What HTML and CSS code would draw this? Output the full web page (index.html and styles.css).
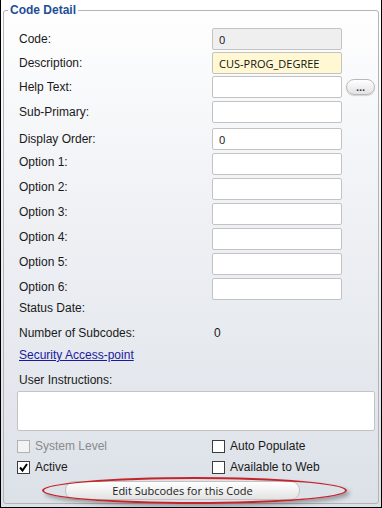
FILE: index.html
```html
<!DOCTYPE html>
<html lang="en">
<head>
  <meta charset="UTF-8" />
  <meta name="viewport" content="width=device-width, initial-scale=1" />
  <title>Code Detail</title>
  <link rel="stylesheet" href="styles.css">
</head>
<body>

  <div class="frame">
    <fieldset class="panel">
      <legend>Code Detail</legend>

      <div class="row gap-2">
        <label>Code:</label>
        <input type="text" class="field readonly" value="0" readonly />
      </div>
      <div class="row gap-2">
        <label>Description:</label>
        <input type="text" class="field required" value="CUS-PROG_DEGREE" />
      </div>
      <div class="row gap-3">
        <label>Help Text:</label>
        <input type="text" class="field" />
        <button class="dots">...</button>
      </div>
      <div class="row gap-5">
        <label>Sub-Primary:</label>
        <input type="text" class="field" />
      </div>
      <div class="row gap-3">
        <label>Display Order:</label>
        <input type="text" class="field" value="0" />
      </div>
      <div class="row gap-3 up">
        <label>Option 1:</label>
        <input type="text" class="field" />
      </div>
      <div class="row gap-3 up">
        <label>Option 2:</label>
        <input type="text" class="field" />
      </div>
      <div class="row gap-3 up">
        <label>Option 3:</label>
        <input type="text" class="field" />
      </div>
      <div class="row gap-3 up">
        <label>Option 4:</label>
        <input type="text" class="field" />
      </div>
      <div class="row gap-3 up">
        <label>Option 5:</label>
        <input type="text" class="field" />
      </div>
      <div class="row up">
        <label>Option 6:</label>
        <input type="text" class="field" />
      </div>

      <div class="line status">Status Date:</div>
      <div class="line subcodes">
        <span class="line-label">Number of Subcodes:</span>
        <span>0</span>
      </div>
      <div class="line security"><a href="#">Security Access-point</a></div>
      <div class="line instructions">User Instructions:</div>
      <textarea class="notes"></textarea>

      <div class="checks">
        <div class="check disabled"><span class="box"></span>System Level</div>
        <div class="check"><span class="box"></span>Auto Populate</div>
        <div class="check"><span class="box checked"><svg width="9" height="9" viewBox="0 0 9 9"><path d="M1 4.5 L3.5 7.5 L8 1" fill="none" stroke="#000" stroke-width="2"/></svg></span>Active</div>
        <div class="check"><span class="box"></span>Available to Web</div>
      </div>

      <div class="action">
        <button class="edit-btn">Edit Subcodes for this Code</button>
        <div class="highlight"></div>
      </div>
    </fieldset>
  </div>

</body>
</html>
```

FILE: styles.css
```css
body {
  margin: 0;
  padding: 0;
  font-family: 'Liberation Sans', Arial, sans-serif;
  font-size: 12px;
  color: #1a1a1a;
}

.frame {
  width: 382px;
  height: 508px;
  box-sizing: border-box;
  border: 1px solid #000;
  border-top: none;
  padding: 2px 2px 3px 2px;
  display: flex;
  flex-direction: column;
  background: linear-gradient(to bottom, #ffffff 0%, #eef0f4 45%, #dce1e8 100%);
}

.panel {
  flex: 1;
  margin: 0;
  padding: 10px 0 0 13px;
  border: 1px solid #b4b4b4;
  border-radius: 3px;
  min-width: 0;
}

.panel legend {
  margin-left: -9px;
  padding: 0 2px;
  font-weight: bold;
  font-size: 12px;
  line-height: 16px;
  color: #1d4f95;
}

.row {
  display: flex;
  align-items: center;
  height: 22px;
}

.row.up label {
  margin-top: -4px;
}

.gap-2 { margin-bottom: 2px; }
.gap-3 { margin-bottom: 3px; }
.gap-5 { margin-bottom: 5px; }

.row label {
  width: 195px;
  padding-left: 2px;
  box-sizing: border-box;
  flex: none;
}

.field {
  width: 130px;
  height: 22px;
  box-sizing: border-box;
  margin: 0;
  padding: 0 6px;
  border: 1px solid #c3c3c3;
  border-radius: 2px;
  background: #fff;
  font-family: 'Open Sans', sans-serif;
  font-size: 11px;
  color: #111;
}

.readonly {
  background: #efefef;
}

.required {
  background: #fff8d2;
}

.dots {
  margin-left: 4px;
  width: 29px;
  height: 16px;
  padding: 0;
  border: 1px solid #b9b9b9;
  border-radius: 8px;
  background: linear-gradient(to bottom, #ffffff, #e2e2e2);
  box-shadow: 0 1px 1px rgba(0, 0, 0, 0.15);
  font-family: 'Liberation Sans', Arial, sans-serif;
  font-size: 11px;
  font-weight: bold;
  line-height: 8px;
  color: #2b3a63;
}

.line {
  height: 16px;
  line-height: 16px;
  padding-left: 2px;
}

.status { margin-top: 0; }
.subcodes { margin-top: 9px; display: flex; }
.line-label { width: 195px; }
.security { margin-top: 6px; }
.security a { color: #1a1aa0; text-decoration: underline; }
.instructions { margin-top: 9px; }

.notes {
  display: block;
  margin: 3px 0 0 0;
  width: 358px;
  height: 40px;
  box-sizing: border-box;
  border: 1px solid #c3c3c3;
  border-radius: 2px;
  background: #fff;
  resize: none;
}

.checks {
  display: grid;
  grid-template-columns: 195px 1fr;
  row-gap: 7px;
  margin-top: 8px;
}

.check {
  display: flex;
  align-items: center;
  height: 14px;
  font-size: 12px;
}

.check.disabled {
  color: #8a8a8a;
}

.box {
  width: 13px;
  height: 13px;
  box-sizing: border-box;
  border: 1px solid #3c3c3c;
  background: #fff;
  margin-right: 5px;
  display: flex;
  align-items: center;
  justify-content: center;
}

.disabled .box {
  border-color: #b2b2b2;
  background: #f3f3f3;
}

.action {
  position: relative;
  margin-top: 7px;
  padding-left: 48px;
}

.edit-btn {
  width: 235px;
  height: 19px;
  padding: 0;
  border: 1px solid #c2c2c2;
  border-radius: 9px;
  background: linear-gradient(to bottom, #ffffff, #e3e3e3);
  font-family: 'Open Sans', sans-serif;
  font-size: 11px;
  color: #1a1a1a;
}

.highlight {
  position: absolute;
  left: 25px;
  top: -4px;
  width: 305px;
  height: 27px;
  box-sizing: border-box;
  border: 2px solid #c4252b;
  border-radius: 50%;
  box-shadow: 3px 3px 4px rgba(0, 0, 0, 0.3);
}
```
